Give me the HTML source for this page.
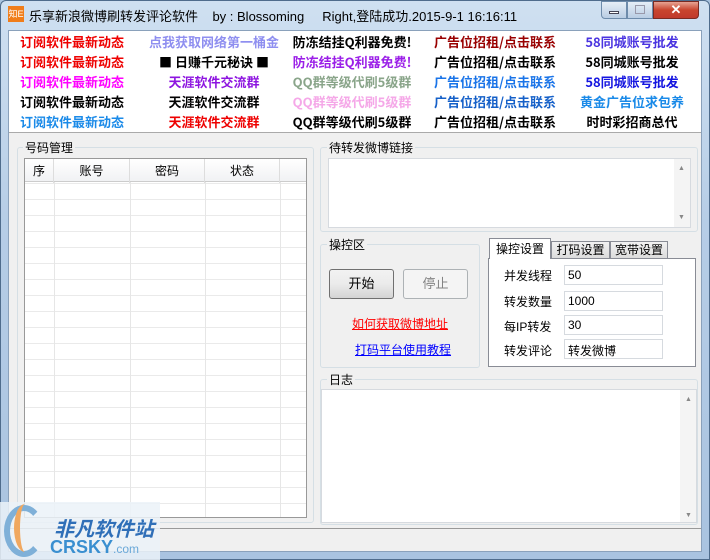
<!DOCTYPE html><html><head><meta charset="utf-8"><style>
*{box-sizing:border-box;margin:0;padding:0}
body{width:710px;height:560px;overflow:hidden;background:#a9c4e0;font-family:"Liberation Sans","Noto Sans CJK SC",sans-serif;font-size:12px;position:relative}
.a{position:absolute}
.frame{left:0;top:0;width:710px;height:560px;background:linear-gradient(#cfe0f1,#b6cde6 40%,#a9c3e0);border:1px solid #4f6c8c;border-radius:6px 6px 0 0}
.client{left:8px;top:30px;width:694px;height:522px;background:#f0f0f0;border:1px solid #8aa1bb}
.ads{left:9px;top:31px;width:692px;height:102px;background:#fff;border-bottom:1px solid #aaa}
.ad{position:absolute;font-weight:bold;font-size:13px;white-space:nowrap;transform:translateX(-50%);font-family:"Noto Sans CJK SC",sans-serif;line-height:16px}
.grp{border:1px solid #d5dfe5;border-radius:3px}
.lbl{background:#f0f0f0;padding:0 2px;font-size:12px;line-height:14px}
.inp{background:#fff;border:1px solid #d6dadf}
.th{position:absolute;top:0;height:24px;line-height:24px;text-align:center;border-right:1px solid #ddd;font-size:12px}
</style></head><body>
<div class="a frame"></div>
<div class="a" style="left:8px;top:6px;width:16px;height:16px;background:#f07d1a;color:#fff;font-size:9px;line-height:16px;text-align:center">知E</div>
<div class="a" style="left:29px;top:6px;font-size:13px;color:#000;white-space:nowrap">乐享新浪微博刷转发评论软件 &nbsp;&nbsp;&nbsp;by : Blossoming &nbsp;&nbsp;&nbsp;&nbsp;Right,登陆成功.2015-9-1 16:16:11</div>
<div class="a" style="left:601px;top:1px;width:26px;height:18px;border:1px solid #6d8bab;border-radius:0 0 0 4px;background:linear-gradient(#e6eef7,#b9cde3)"></div>
<div class="a" style="left:609px;top:11px;width:10px;height:3px;background:#fff;border:1px solid #445"></div>
<div class="a" style="left:627px;top:1px;width:26px;height:18px;border:1px solid #6d8bab;background:linear-gradient(#e6eef7,#b9cde3)"></div>
<div class="a" style="left:635px;top:5px;width:10px;height:9px;border:1px solid #99a"></div>
<div class="a" style="left:653px;top:1px;width:46px;height:18px;border:1px solid #7a2a22;border-radius:0 0 4px 0;background:linear-gradient(#e8a393,#c9452e 50%,#c0392b);color:#fff;font-weight:bold;text-align:center;line-height:16px;font-size:13px">✕</div>
<div class="a client"></div>
<div class="a ads">
<div class="ad" style="left:63px;top:3px;color:#e00">订阅软件最新动态</div>
<div class="ad" style="left:205px;top:3px;color:#8f8ff0">点我获取网络第一桶金</div>
<div class="ad" style="left:343px;top:3px;color:#000">防冻结挂Q利器免费!</div>
<div class="ad" style="left:486px;top:3px;color:#900">广告位招租/点击联系</div>
<div class="ad" style="left:623px;top:3px;color:#4a34e0">58同城账号批发</div>
<div class="ad" style="left:63px;top:23px;color:#e00">订阅软件最新动态</div>
<div class="ad" style="left:205px;top:23px;color:#000">■ 日赚千元秘诀 ■</div>
<div class="ad" style="left:343px;top:23px;color:#9b1fe8">防冻结挂Q利器免费!</div>
<div class="ad" style="left:486px;top:23px;color:#000">广告位招租/点击联系</div>
<div class="ad" style="left:623px;top:23px;color:#000">58同城账号批发</div>
<div class="ad" style="left:63px;top:43px;color:#f0f">订阅软件最新动态</div>
<div class="ad" style="left:205px;top:43px;color:#8d14e0">天涯软件交流群</div>
<div class="ad" style="left:343px;top:43px;color:#8aa58a">QQ群等级代刷5级群</div>
<div class="ad" style="left:486px;top:43px;color:#1a74e8">广告位招租/点击联系</div>
<div class="ad" style="left:623px;top:43px;color:#1515e0">58同城账号批发</div>
<div class="ad" style="left:63px;top:63px;color:#000">订阅软件最新动态</div>
<div class="ad" style="left:205px;top:63px;color:#000">天涯软件交流群</div>
<div class="ad" style="left:343px;top:63px;color:#f5a8e8">QQ群等级代刷5级群</div>
<div class="ad" style="left:486px;top:63px;color:#1560c8">广告位招租/点击联系</div>
<div class="ad" style="left:623px;top:63px;color:#1a8ae8">黄金广告位求包养</div>
<div class="ad" style="left:63px;top:83px;color:#1a8ae8">订阅软件最新动态</div>
<div class="ad" style="left:205px;top:83px;color:#e00">天涯软件交流群</div>
<div class="ad" style="left:343px;top:83px;color:#000">QQ群等级代刷5级群</div>
<div class="ad" style="left:486px;top:83px;color:#000">广告位招租/点击联系</div>
<div class="ad" style="left:623px;top:83px;color:#000">时时彩招商总代</div>
</div>
<!-- 号码管理 -->
<div class="a grp" style="left:17px;top:147px;width:297px;height:376px"></div>
<div class="a lbl" style="left:23px;top:141px">号码管理</div>
<div class="a" style="left:24px;top:158px;width:283px;height:360px;border:1px solid #999;background-color:#fff;background-image:linear-gradient(#eaeaea 1px,transparent 1px);background-size:100% 16px;background-position:0 24px"></div>
<div class="a" style="left:25px;top:159px;width:281px;height:23px;background:linear-gradient(#fff,#f1f2f4);border-bottom:1px solid #ccc"></div>
<div class="a" style="left:54px;top:182px;width:1px;height:335px;background:#e6e6e6"></div>
<div class="a" style="left:130px;top:182px;width:1px;height:335px;background:#e6e6e6"></div>
<div class="a" style="left:205px;top:182px;width:1px;height:335px;background:#e6e6e6"></div>
<div class="a" style="left:280px;top:182px;width:1px;height:335px;background:#e6e6e6"></div>
<div class="a" style="left:25px;top:159px;width:282px;height:23px">
<div class="th" style="left:0;width:29px">序</div><div class="th" style="left:29px;width:76px">账号</div><div class="th" style="left:105px;width:75px">密码</div><div class="th" style="left:180px;width:75px">状态</div></div>
<!-- 待转发 -->
<div class="a grp" style="left:320px;top:147px;width:378px;height:85px"></div>
<div class="a lbl" style="left:327px;top:141px">待转发微博链接</div>
<div class="a inp" style="left:328px;top:158px;width:363px;height:70px"></div>
<div class="a" style="left:674px;top:159px;width:16px;height:68px;background:#f4f4f4"></div>
<div class="a" style="left:678px;top:165px;font-size:7px;color:#888">▲</div>
<div class="a" style="left:678px;top:214px;font-size:7px;color:#888">▼</div>
<!-- 操控区 -->
<div class="a grp" style="left:320px;top:244px;width:160px;height:124px"></div>
<div class="a lbl" style="left:327px;top:238px">操控区</div>
<div class="a" style="left:329px;top:269px;width:65px;height:30px;border:1px solid #707070;border-radius:3px;background:linear-gradient(#f2f2f2,#ebebeb 50%,#d4d4d4);text-align:center;line-height:28px;font-size:13px">开始</div>
<div class="a" style="left:403px;top:269px;width:65px;height:30px;border:1px solid #adb2b5;border-radius:3px;background:#f4f4f4;text-align:center;line-height:28px;font-size:13px;color:#838383">停止</div>
<div class="a" style="left:352px;top:315px;color:#f00;text-decoration:underline;font-size:12px">如何获取微博地址</div>
<div class="a" style="left:355px;top:341px;color:#00f;text-decoration:underline;font-size:12px">打码平台使用教程</div>
<!-- tabs -->
<div class="a" style="left:488px;top:258px;width:208px;height:109px;border:1px solid #898c95;background:#fff"></div>
<div class="a" style="left:489px;top:238px;width:62px;height:21px;background:#fff;border:1px solid #898c95;border-bottom:none;text-align:center;line-height:20px;font-size:12px">操控设置</div>
<div class="a" style="left:551px;top:241px;width:59px;height:18px;background:linear-gradient(#f2f2f2,#dcdcdc);border:1px solid #898c95;text-align:center;line-height:17px;font-size:12px">打码设置</div>
<div class="a" style="left:610px;top:241px;width:58px;height:18px;background:linear-gradient(#f2f2f2,#dcdcdc);border:1px solid #898c95;text-align:center;line-height:17px;font-size:12px">宽带设置</div>
<div class="a" style="left:504px;top:267px">并发线程</div><div class="a inp" style="left:564px;top:265px;width:99px;height:20px;padding:2px 3px">50</div>
<div class="a" style="left:504px;top:293px">转发数量</div><div class="a inp" style="left:564px;top:291px;width:99px;height:20px;padding:2px 3px">1000</div>
<div class="a" style="left:504px;top:318px">每IP转发</div><div class="a inp" style="left:564px;top:315px;width:99px;height:20px;padding:2px 3px">30</div>
<div class="a" style="left:504px;top:342px">转发评论</div><div class="a inp" style="left:564px;top:339px;width:99px;height:20px;padding:2px 3px">转发微博</div>
<!-- 日志 -->
<div class="a grp" style="left:320px;top:379px;width:378px;height:146px"></div>
<div class="a lbl" style="left:327px;top:373px">日志</div>
<div class="a inp" style="left:321px;top:389px;width:376px;height:134px"></div>
<div class="a" style="left:680px;top:390px;width:16px;height:132px;background:#f4f4f4"></div>
<div class="a" style="left:685px;top:396px;font-size:7px;color:#888">▲</div>
<div class="a" style="left:685px;top:512px;font-size:7px;color:#888">▼</div>
<!-- status -->
<div class="a" style="left:9px;top:528px;width:692px;height:1px;background:#999"></div>
<!-- watermark -->
<div class="a" style="left:0;top:502px;width:160px;height:58px;background:rgba(235,242,248,0.85)"></div>
<div class="a" style="left:4px;top:505px;width:40px;height:52px;border-radius:50%;border:6px solid #7fb0d8;border-right-color:transparent"></div>
<div class="a" style="left:14px;top:504px;width:22px;height:48px;border-radius:50%;border-left:6px solid #f0a860"></div>
<div class="a" style="left:54px;top:513px;font-size:20px;font-weight:bold;font-style:italic;color:#2f6fb8;white-space:nowrap">非凡软件站</div>
<div class="a" style="left:50px;top:537px;font-size:18px;font-weight:bold;color:#3a8fd0;white-space:nowrap">CRSKY<span style="font-size:12px;font-weight:normal;color:#6aa8d8">.com</span></div>
</body></html>
